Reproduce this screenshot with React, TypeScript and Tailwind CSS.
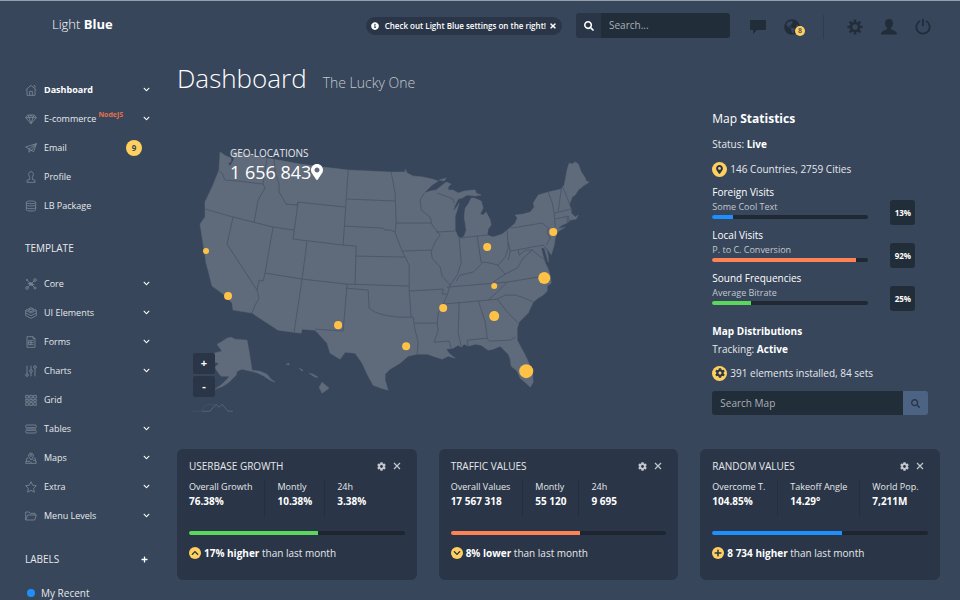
import type { ReactNode } from "react";
import {
  FaSearch,
  FaTimes,
  FaInfoCircle,
  FaMapMarkerAlt,
  FaPlus,
  FaChevronUp,
  FaChevronDown,
  FaCog,
  FaGlobeAmericas,
} from "react-icons/fa";

interface NavItem {
  label: string;
  icon: ReactNode;
  active?: boolean;
  tag?: string;
  badge?: number;
  expandable?: boolean;
}

const mainNav: NavItem[] = [
  {
    label: "Dashboard",
    active: true,
    expandable: true,
    icon: <path d="M1 9 9 2l8 7M3 8v9h12V8M13 2.500h2v3M7 17v-6h4v6" />,
  },
  {
    label: "E-commerce",
    tag: "NodeJS",
    expandable: true,
    icon: <path d="M4 3h10l3 4-8 9-8-9 3-4ZM1 7h16M6 7l3 9 3-9M4 3l2 4 3-4 3 4 2-4" />,
  },
  {
    label: "Email",
    badge: 9,
    icon: <path d="M17 2.500 1 7.500l5 3 11-8-7 10-4-2v5l2.500-3M17 2.500l-4 12-4-2" />,
  },
  {
    label: "Profile",
    icon: <path d="M9 1C6.500 1 5.500 3 5.500 5S7 8.500 7 10v2.500L3 14v3h12v-3l-4-1.500V10c0-1.500 1.500-3 1.500-5S11.500 1 9 1Z" />,
  },
  {
    label: "LB Package",
    icon: (
      <path d="M2 3.500C2 2 5 1.500 9 1.500s7 .5 7 2-3 2-7 2-7-.5-7-2Zm0 0v11c0 1.500 3 2 7 2s7-.5 7-2v-11M2 7c0 1.500 3 2 7 2s7-.5 7-2M2 11c0 1.500 3 2 7 2s7-.5 7-2" />
    ),
  },
];

const templateNav: NavItem[] = [
  {
    label: "Core",
    expandable: true,
    icon: (
      <>
        <path d="m4 4 10 10M14 4 4 14M9 9l5 1M9 9 4 8" />
        <circle cx="15" cy="3" r="2" />
        <circle cx="3" cy="15" r="2" />
        <circle cx="15" cy="15" r="1.500" />
        <circle cx="3" cy="3" r="1" />
        <circle cx="9" cy="9" r="2" />
      </>
    ),
  },
  {
    label: "UI Elements",
    expandable: true,
    icon: <path d="m9 1 8 4-8 4-8-4 8-4ZM1 5v4l8 4 8-4V5M1 9v4l8 4 8-4V9M5 5l4-2 4 2-4 2-4-2Z" />,
  },
  {
    label: "Forms",
    expandable: true,
    icon: <path d="M3 1h9l3 3v13H3V1Zm9 0v3h3M5 7h8M5 10h8M5 13h8M5 7v6M9 7v6" />,
  },
  {
    label: "Charts",
    expandable: true,
    icon: (
      <>
        <path d="M3 1v12M9 1v6M9 11v6M15 5v12" />
        <circle cx="3" cy="15" r="2" />
        <circle cx="9" cy="9" r="2" />
        <circle cx="15" cy="3" r="2" />
      </>
    ),
  },
  {
    label: "Grid",
    icon: <path d="M1 2h4v4H1zM7 2h4v4H7zM13 2h4v4h-4zM1 8h4v3H1zM7 8h4v3H7zM13 8h4v3h-4zM1 13h4v4H1zM7 13h4v4H7zM13 13h4v4h-4z" />,
  },
  {
    label: "Tables",
    expandable: true,
    icon: <path d="M2 3h14l1 2-1 2H2L1 5l1-2ZM2 11h14l1 2-1 2H2l-1-2 1-2ZM1 9h16" />,
  },
  {
    label: "Maps",
    expandable: true,
    icon: (
      <>
        <path d="M9 12 5.500 6.500a3.700 3.700 0 1 1 7 0L9 12ZM5 9H3l-2 8h16l-2-8h-2M1.500 14h6l3 3M11 11l5 3" />
        <circle cx="9" cy="5" r="1.500" />
      </>
    ),
  },
  {
    label: "Extra",
    expandable: true,
    icon: <path d="m9 1 2.400 5.200 5.600.8-4 4 1 5.800L9 14l-5 2.800L5 11 1 7l5.600-.8L9 1Z" />,
  },
  {
    label: "Menu Levels",
    expandable: true,
    icon: <path d="M1 15V3h5l2 2h7v2.500M1 15 4 7.500h13L14.500 15H1Z" />,
  },
];

const visits = [
  { title: "Foreign Visits", note: "Some Cool Text", value: 13, color: "bg-[#1e8fff]" },
  { title: "Local Visits", note: "P. to C. Conversion", value: 92, color: "bg-[#ff8255]" },
  { title: "Sound Frequencies", note: "Average Bitrate", value: 25, color: "bg-[#5bd75b]" },
];

const cards = [
  {
    title: "USERBASE GROWTH",
    stats: [
      ["Overall Growth", "76.38%"],
      ["Montly", "10.38%"],
      ["24h", "3.38%"],
    ],
    color: "bg-[#5bd75b]",
    icon: <FaChevronUp className="h-2 w-2" />,
    change: "17% higher",
  },
  {
    title: "TRAFFIC VALUES",
    stats: [
      ["Overall Values", "17 567 318"],
      ["Montly", "55 120"],
      ["24h", "9 695"],
    ],
    color: "bg-[#ff8255]",
    icon: <FaChevronDown className="h-2 w-2" />,
    change: "8% lower",
  },
  {
    title: "RANDOM VALUES",
    stats: [
      ["Overcome T.", "104.85%"],
      ["Takeoff Angle", "14.29°"],
      ["World Pop.", "7,211M"],
    ],
    color: "bg-[#1e8fff]",
    icon: <FaPlus className="h-2 w-2" />,
    change: "8 734 higher",
  },
];

const mainland =
  "M220 152 226 156 231 158 231 162 228 163 230 166 232 163 234 159 232 151 267 158 300 164 323 167 348 170 390 172 405 172 405 169 407 173 413 176 423 177 432 179 438 181 432 185 424 193 430 191 436 190 446 182 451 184 448 187 448 190 453 190 458 193 464 191 472 190 475 190 476 193 481 195 475 196 467 195 462 198 458 199 455 205 453 211 455 209 459 203 457 210 455 216 455 230 458 237 461 238 464 236 466 230 464 217 465 208 468 204 471 198 474 198 481 201 483 208 480 214 483 215 486 212 490 220 491 225 488 229 487 235 493 237 502 234 507 230 515 223 517 218 515 215 523 214 530 212 534 207 533 203 538 195 548 192 561 189 564 185 567 169 569 163 572 164 575 162 578 164 581 172 585 178 586 181 589 182 583 186 578 190 575 195 572 197 569 205 571 209 571 213 575 217 578 215 576 219 570 220 567 223 562 225 557 229 565 227 557 232 555 238 554 245 551 255 546 248 548 256 548 262 544 248 541 248 543 256 545 263 548 269 550 275 551 283 547 286 547 291 543 295 538 298 533 302 528 313 519 322 517 328 517 340 525 355 532 370 533 382 530 387 527 384 520 378 517 371 511 366 510 359 508 354 500 346 493 349 488 350 481 345 475 344 468 346 464 344 461 347 458 345 453 348 446 349 449 353 455 358 448 356 442 359 433 356 427 354 417 354 408 356 400 363 390 369 385 374 385 380 388 390 381 388 373 385 368 376 362 363 355 353 345 352 340 359 330 353 327 343 315 330 302 329 301 333 278 330 252 313 233 310 232 303 223 294 212 286 208 270 206 263 203 243 200 224 205 217 205 202 213 185 219 170Z";

const borders = [
  "M219 171 222 173 225 180 238 181 263 184",
  "M267 158 263 184 265 188 258 200 254 222",
  "M205 209 233 217 273 227 294 230",
  "M274 159 275 172 279 184 279 192 286 204 297 205 298 202 293 239",
  "M298 202 345 207",
  "M348 170 343 245M293 239 343 245 356 246 355 285M355 256 405 257",
  "M347 199 395 201M344 226 382 228 385 230 390 230 395 232",
  "M233 217 227 244 257 290",
  "M273 227 265 273 263 281 259 280 257 290 259 298 255 305 252 313",
  "M307 241 302 279 294 332",
  "M265 273 302 279 347 284 409 286",
  "M347 284 343 331 315 329",
  "M346 288 368 290 369 308 375 312 384 315 398 317 413 317",
  "M391 172 395 193 396 223 395 232 397 238 402 251 405 257 409 265 409 290 411 317",
  "M396 223 431 223M402 251 431 250",
  "M424 193 420 200 421 210 430 217 432 225 440 235 435 242 431 251 432 258 440 267 442 276 450 285",
  "M436 232 455 231M437 193 453 199 454 203",
  "M459 238 461 263 457 275 450 285 447 295 443 304",
  "M459 238 477 236 487 235M477 236 481 263",
  "M507 230 508 248 505 257 498 265 490 263 483 262 480 265 473 272 460 275 456 281",
  "M508 242 510 251 543 245 551 255M511 228 542 223 548 228 547 233 550 238 546 245",
  "M548 192 552 203 554 213 555 227M561 189 558 211M562 186 570 205",
  "M554 213 571 209M555 219 568 216 569 221M567 217 567 223",
  "M510 251 508 260M518 250 519 255 525 250 532 250 523 258 517 268 505 274 497 265M532 250 538 255 545 260",
  "M447 287 507 282 544 276M505 274 493 282",
  "M443 304 488 300 497 299 505 295 515 295 522 297 533 302M507 282 497 292 488 300",
  "M497 299 508 313 518 323",
  "M478 300 485 322 487 338 489 341 510 340 515 337M487 338 467 340 468 346",
  "M459 302 458 333 461 346",
  "M443 304 438 313 437 323 438 330 434 342 449 341 451 348",
  "M409 291 443 289 442 294 446 294M415 323 437 323",
  "M413 317 415 330 418 342 417 354",
];

const islands = [
  "M227 338 231 337 235 339 247 340 249 351 252 370 260 371 267 374 271 379 275 382 270 380 264 376 258 373 251 371 242 369 237 371 236 375 229 382 223 386 215 389 222 384 228 378 229 376 221 376 217 371 215 367 219 363 215 362 214 353 222 351 217 344 221 342Z",
  "M286 364 289 363 289 365Z",
  "M299 368 303 370 302 371Z",
  "M309 373 313 374 318 377 315 377Z",
  "M322 382 329 388 322 393 319 387Z",
  "M439 180 446 178 444 181Z",
];

// [x, y, radius]
const cities = [
  [206, 251, 3],
  [228, 296, 4],
  [338, 325, 4],
  [406, 346, 4],
  [443, 308, 4],
  [494, 286, 3],
  [487, 247, 4],
  [494, 316, 5],
  [526, 371, 7],
  [544, 278, 6],
  [553, 232, 4],
];

function NavRow({ item }: { item: NavItem }) {
  return (
    <li>
      <a href="#" className="flex h-[29px] items-center text-[9px]">
        <svg
          viewBox="0 0 18 18"
          className="mr-[7px] h-3 w-3 flex-none text-[#7f8a99]"
          fill="none"
          stroke="currentColor"
          strokeWidth="1.2"
        >
          {item.icon}
        </svg>
        <span className={item.active ? "font-bold text-white" : ""}>{item.label}</span>
        {item.tag && (
          <sup className="ml-[2px] text-[7px] font-bold text-[#e5704b]">{item.tag}</sup>
        )}
        {item.badge && (
          <span className="ml-auto mr-2 flex h-4 w-4 items-center justify-center rounded-full bg-[#ffd05f] text-[8px] font-bold text-[#37465b]">
            {item.badge}
          </span>
        )}
        {item.expandable && <FaChevronDown className="ml-auto h-[7px] w-[7px] text-white" />}
      </a>
    </li>
  );
}

function Sidebar() {
  return (
    <aside className="w-[150px] flex-none pl-[25px] pt-[25px]">
      <nav>
        <ul>
          {mainNav.map((item) => (
            <NavRow key={item.label} item={item} />
          ))}
        </ul>
        <h5 className="mt-[19px] text-[10px] leading-[18px]">TEMPLATE</h5>
        <ul className="mt-3">
          {templateNav.map((item) => (
            <NavRow key={item.label} item={item} />
          ))}
        </ul>
      </nav>
      <div className="mt-5 flex items-center justify-between">
        <h5 className="text-[10px] leading-[18px]">LABELS</h5>
        <button type="button" aria-label="Add label" className="mr-[2px] text-white">
          <FaPlus className="h-[7px] w-[7px]" />
        </button>
      </div>
      <a href="#" className="mt-4 flex items-center gap-1.5 pl-[2px] text-[10px] leading-[18px]">
        <span className="h-2 w-2 rounded-full bg-[#1e8fff]" />
        My Recent
      </a>
    </aside>
  );
}

function Header() {
  return (
    <header className="flex h-[49px] flex-none items-center pl-[52px] pr-5">
      <a href="#" className="pb-[2px] text-[13px] font-light text-white">
        Light <strong className="font-bold">Blue</strong>
      </a>
      <div className="ml-auto flex h-[18px] items-center rounded-full bg-[#2a3647] px-[5px] text-[8px] font-semibold text-white">
        <FaInfoCircle className="mr-[6px] h-2 w-2" />
        Check out Light Blue settings on the right!
        <button type="button" aria-label="Dismiss" className="ml-[3px]">
          <FaTimes className="h-2 w-2" />
        </button>
      </div>
      <form className="ml-[14px] flex h-[25px] w-[154px] overflow-hidden rounded-[3px]">
        <button
          type="button"
          aria-label="Search"
          className="flex w-[25px] flex-none items-center justify-center bg-[#2a3647] text-white"
        >
          <FaSearch className="h-[10px] w-[10px]" />
        </button>
        <input
          type="text"
          aria-label="Search"
          placeholder="Search..."
          className="min-w-0 flex-1 bg-[#222d3a] px-2 text-[10px] outline-none placeholder:text-[#a9b0b9]"
        />
      </form>
      <nav className="ml-[11px] flex items-center pt-[3px] text-[#222d3a]">
        <button type="button" aria-label="Messages" className="flex w-[34px] justify-center">
          <svg viewBox="0 0 16 16" className="h-4 w-4" fill="currentColor">
            <path d="M1 1h14a1 1 0 0 1 1 1v8a1 1 0 0 1-1 1H7l-4 4v-4H1a1 1 0 0 1-1-1V2a1 1 0 0 1 1-1Z" />
          </svg>
        </button>
        <button type="button" aria-label="Notifications" className="relative flex w-[34px] justify-center">
          <FaGlobeAmericas className="h-4 w-4" />
          <span className="absolute left-[20px] top-[7px] flex h-[10px] w-[10px] items-center justify-center rounded-full bg-[#ffd05f] text-[7px] font-semibold text-[#37465b]">
            8
          </span>
        </button>
        <span className="mx-[14px] h-6 w-px bg-[#2f3c4f]" />
        <button type="button" aria-label="Settings" className="flex w-[34px] justify-center">
          <svg viewBox="0 0 16 16" className="h-4 w-4" fill="none" stroke="currentColor">
            <circle cx="8" cy="8" r="4" strokeWidth="2.500" />
            <path
              strokeWidth="2.500"
              d="M8 .5v3M8 12.500v3M.5 8h3M12.500 8h3M2.700 2.700l2 2M11.300 11.300l2 2M13.300 2.700l-2 2M4.700 11.300l-2 2"
            />
          </svg>
        </button>
        <button type="button" aria-label="Account" className="flex w-[34px] justify-center">
          <svg viewBox="0 0 16 16" className="h-4 w-4" fill="currentColor">
            <path d="M8 0c2.500 0 4 1.600 4 4.200 0 2-.8 3.600-2 4.600v1.400c2.500 1 6 2.300 6 4.800v.5H0V15c0-2.500 3.500-3.800 6-4.800V8.800c-1.200-1-2-2.600-2-4.600C4 1.600 5.500 0 8 0Z" />
          </svg>
        </button>
        <button type="button" aria-label="Log out" className="flex w-[34px] justify-center">
          <svg viewBox="0 0 16 16" className="h-4 w-4" fill="none" stroke="currentColor" strokeWidth="1.800">
            <path d="M5 2a6.700 6.700 0 1 0 6 0M8 0v7" />
          </svg>
        </button>
      </nav>
    </header>
  );
}

function UsMap() {
  return (
    <section className="relative col-span-2">
      <svg viewBox="177 130 501 290" className="block h-auto w-full" role="img" aria-label="Map of the United States">
        <g fill="#5f6a7b" stroke="#5f6a7b" strokeWidth="0.5" strokeLinejoin="round">
          <path d={mainland} />
          {islands.map((d) => (
            <path key={d} d={d} />
          ))}
        </g>
        <g fill="none" stroke="#465367" strokeWidth="0.8" strokeLinejoin="round">
          {borders.map((d) => (
            <path key={d} d={d} />
          ))}
        </g>
        <g fill="#ffc247">
          {cities.map(([x, y, r]) => (
            <circle key={`${x}-${y}`} cx={x} cy={y} r={r} />
          ))}
        </g>
        <path
          d="M202 411h8l6-7 3 3 3-3 6 7h5"
          fill="none"
          stroke="#5f6a7b"
          strokeWidth="0.8"
        />
        <path d="M193 411h9q2-7 8-7t6 4" fill="none" stroke="#465367" strokeWidth="0.8" />
      </svg>
      <div className="absolute left-[53px] top-[16px]">
        <h6 className="text-[10px] leading-[14px]">GEO-LOCATIONS</h6>
        <p className="flex items-center text-[18px] leading-[24px] text-white">
          1 656 843
          <FaMapMarkerAlt className="h-4 w-3" />
        </p>
      </div>
      <div className="absolute left-4 top-[223px] flex flex-col gap-[2px] text-[11px] font-bold text-white">
        <button type="button" className="h-[21px] w-[22px] rounded-[2px] bg-[#2a3647]">
          +
        </button>
        <button type="button" className="h-[21px] w-[22px] rounded-[2px] bg-[#2a3647]">
          -
        </button>
      </div>
    </section>
  );
}

function MapStatistics() {
  return (
    <section className="px-3 text-[10px] leading-[16px]">
      <h2 className="mt-[-20px] text-[12px] leading-[18px] text-white">
        Map <strong className="font-bold">Statistics</strong>
      </h2>
      <p className="mt-2">
        Status: <strong className="font-bold text-white">Live</strong>
      </p>
      <p className="mt-[9px] flex items-center gap-[3px]">
        <span className="flex h-[15px] w-[15px] items-center justify-center rounded-full bg-[#ffd05f] text-[#2a3647]">
          <FaMapMarkerAlt className="h-[9px] w-[9px]" />
        </span>
        146 Countries, 2759 Cities
      </p>
      <div className="mt-2 flex flex-col gap-[3px]">
        {visits.map((visit) => (
          <div key={visit.title} className="flex items-end gap-[22px]">
            <div className="w-[156px] pb-[6px]">
              <h6 className="leading-[15px] text-white">{visit.title}</h6>
              <p className="text-[9px] leading-[14px] text-[#c3c8ce]">{visit.note}</p>
              <div className="mt-px h-1 overflow-hidden rounded-[2px] bg-[#1f2833]">
                <div className={`h-full ${visit.color}`} style={{ width: `${visit.value}%` }} />
              </div>
            </div>
            <span className="flex h-[25px] w-[25px] items-center justify-center rounded-[3px] bg-[#222d3a] text-[8px] font-bold text-white">
              {visit.value}%
            </span>
          </div>
        ))}
      </div>
      <h6 className="mt-3 font-bold text-white">Map Distributions</h6>
      <p className="mt-[2px]">
        Tracking: <strong className="font-bold text-white">Active</strong>
      </p>
      <p className="mt-2 flex items-center gap-[3px]">
        <span className="flex h-[15px] w-[15px] items-center justify-center rounded-full bg-[#ffd05f] text-[#2a3647]">
          <FaCog className="h-[10px] w-[10px]" />
        </span>
        391 elements installed, 84 sets
      </p>
      <form className="mt-[10px] flex h-6 overflow-hidden rounded-[3px]">
        <input
          type="text"
          aria-label="Search Map"
          placeholder="Search Map"
          className="min-w-0 flex-1 bg-[#222d3a] px-2 text-[10px] outline-none placeholder:text-[#a9b0b9]"
        />
        <button
          type="button"
          aria-label="Search map"
          className="flex w-[25px] items-center justify-center bg-[#4d6384] text-[#2a3647]"
        >
          <FaSearch className="h-[9px] w-[9px]" />
        </button>
      </form>
    </section>
  );
}

function StatCard({ card }: { card: (typeof cards)[number] }) {
  return (
    <section className="rounded-[6px] bg-[#2a3647] px-3 pb-[18px] pt-2">
      <header className="flex items-center">
        <h4 className="text-[10px] leading-[18px]">{card.title}</h4>
        <button type="button" aria-label="Widget settings" className="ml-auto text-[#c3c8ce]">
          <FaCog className="h-[9px] w-[9px]" />
        </button>
        <button type="button" aria-label="Close widget" className="ml-[7px] mr-1 text-[#c3c8ce]">
          <svg viewBox="0 0 8 8" className="h-2 w-2" stroke="currentColor" strokeWidth="1.200">
            <path d="m1 1 6 6M7 1 1 7" />
          </svg>
        </button>
      </header>
      <dl className="mt-[5px] flex">
        {card.stats.map(([label, value]) => (
          <div
            key={label}
            className="mr-3 h-[37px] border-r border-[#243040] pr-3 last:mr-0 last:border-r-0 last:pr-0"
          >
            <dt className="text-[9px] leading-[14px]">{label}</dt>
            <dd className="text-[10px] font-bold leading-[15px] text-white">{value}</dd>
          </div>
        ))}
      </dl>
      <div className="mt-[14px] h-1 overflow-hidden rounded-[2px] bg-[#1d2530]">
        <div className={`h-full w-3/5 ${card.color}`} />
      </div>
      <p className="mt-[9px] flex items-center gap-[3px] text-[10px] leading-[18px]">
        <span className="flex h-3 w-3 items-center justify-center rounded-full bg-[#ffd05f] text-[#2a3647]">
          {card.icon}
        </span>
        <span>
          <strong className="font-bold text-white">{card.change}</strong> than last month
        </span>
      </p>
    </section>
  );
}

export default function App() {
  return (
    <div className="flex h-screen flex-col overflow-hidden border-t border-[#93a0ab] bg-[#37465b] font-['Open_Sans',sans-serif] text-[#e6e8eb]">
      <Header />
      <div className="flex min-h-0 flex-1">
        <Sidebar />
        <main className="min-w-0 flex-1 pl-[27px] pr-5">
          <h1 className="flex h-20 items-baseline gap-4 pt-[9px] text-[26px] font-light leading-[38px] text-white">
            Dashboard
            <small className="text-[14px] text-[#c3c8ce]">The Lucky One</small>
          </h1>
          <div className="grid grid-cols-3 gap-x-[22px]">
            <UsMap />
            <MapStatistics />
          </div>
          <div className="mt-[29px] grid grid-cols-3 gap-x-[22px]">
            {cards.map((card) => (
              <StatCard key={card.title} card={card} />
            ))}
          </div>
        </main>
      </div>
    </div>
  );
}
